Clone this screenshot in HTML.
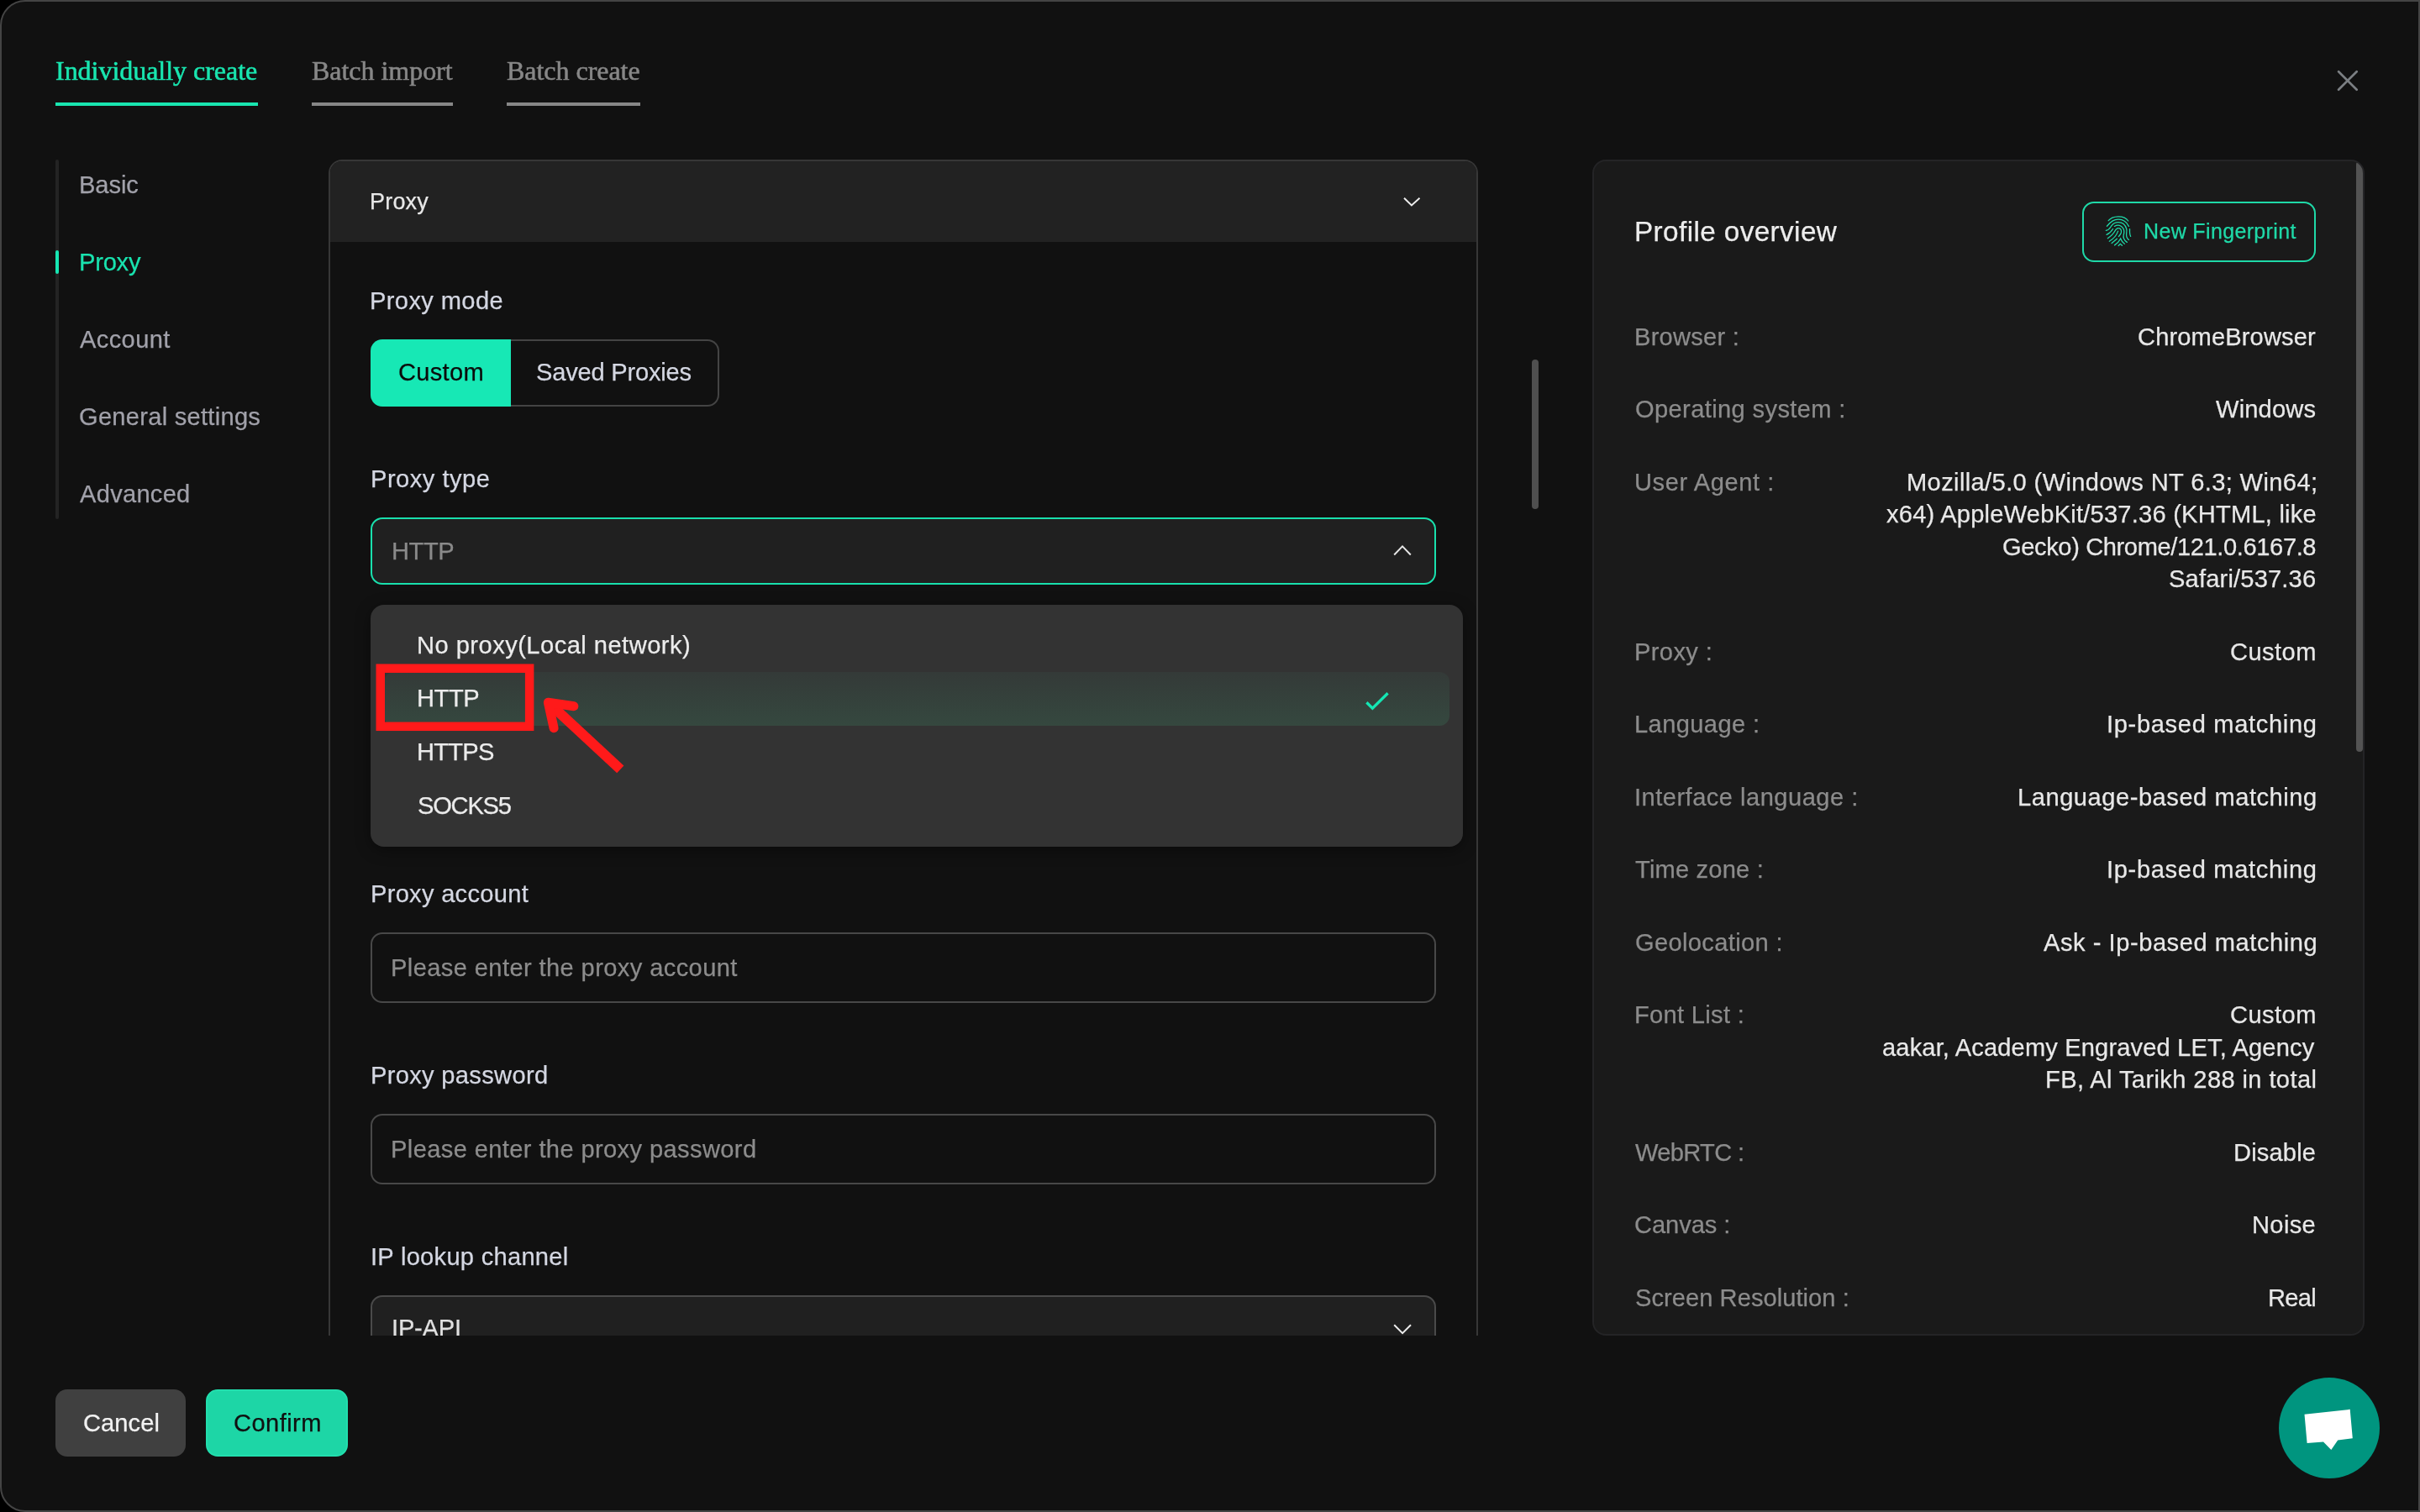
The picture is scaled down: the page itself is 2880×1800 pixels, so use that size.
<!DOCTYPE html>
<html lang="en"><head><meta charset="utf-8"><title>Create profile - Proxy</title>
<style>
*{box-sizing:border-box;margin:0;padding:0}
html,body{width:2880px;height:1800px;background:#000;overflow:hidden}
body{position:relative;font-family:"Liberation Sans",sans-serif}
.a{position:absolute}
.t{position:absolute;height:60px;line-height:60px;white-space:pre;will-change:transform}
.s{font-family:"Liberation Sans",sans-serif;-webkit-text-stroke:0.25px currentColor}
.r{font-family:"Liberation Serif",serif;-webkit-text-stroke:0.55px currentColor}
.modal{left:0;top:0;width:2880px;height:1800px;background:#111;border:2px solid #444;border-radius:30px 0 0 30px}
.card{left:391px;top:190px;width:1368px;height:1400px;border:2px solid #373737;border-bottom:0;border-radius:16px 16px 0 0;overflow:hidden}
.cardin{left:-393px;top:-192px;width:2880px;height:1800px}
.hdrbg{left:391px;top:190px;width:1368px;height:98px;background:#222}
.inp{left:441px;width:1268px;border:2px solid #484848;border-radius:14px}
svg{position:absolute;overflow:visible}
</style></head>
<body>
<div class="a modal"></div>

<!-- tabs -->
<div class="t r" style="left:65.5px;top:54.0px;font-size:32px;color:#19e6b0;letter-spacing:-0.03px;">Individually create</div>
<div class="t r" style="left:370.5px;top:54.0px;font-size:32px;color:#878787;letter-spacing:-0.03px;">Batch import</div>
<div class="t r" style="left:602.5px;top:54.0px;font-size:32px;color:#878787;letter-spacing:-0.03px;">Batch create</div>
<div class="a" style="left:66px;top:122px;width:241px;height:4px;background:#19e6b0"></div>
<div class="a" style="left:371px;top:122px;width:168px;height:4px;background:#878787"></div>
<div class="a" style="left:603px;top:122px;width:159px;height:4px;background:#878787"></div>
<svg style="left:2774px;top:76px" width="40" height="40" viewBox="0 0 40 40"><path d="M9.1 9.2 L30.7 30.8 M30.7 9.2 L9.1 30.8" stroke="#7b7f83" stroke-width="2.7" stroke-linecap="round" fill="none"/></svg>

<!-- sidebar -->
<div class="a" style="left:66px;top:190px;width:4px;height:428px;background:#242424;border-radius:2px"></div>
<div class="a" style="left:66px;top:298px;width:4px;height:28px;background:#17e6b3;border-radius:2px"></div>
<div class="t s" style="left:93.5px;top:190.0px;font-size:29.1px;color:#a1a1aa;letter-spacing:-0.07px;">Basic</div>
<div class="t s" style="left:93.6px;top:281.8px;font-size:29.1px;color:#19e3af;letter-spacing:-0.23px;">Proxy</div>
<div class="t s" style="left:95.4px;top:374.0px;font-size:29.1px;color:#a1a1aa;letter-spacing:0.37px;">Account</div>
<div class="t s" style="left:94.4px;top:465.7px;font-size:29.1px;color:#a1a1aa;letter-spacing:0.27px;">General settings</div>
<div class="t s" style="left:95.4px;top:557.7px;font-size:29.1px;color:#a1a1aa;letter-spacing:0.27px;">Advanced</div>

<!-- main card -->
<div class="a card"><div class="a cardin">
<div class="a hdrbg"></div>
<div class="t s" style="left:440.0px;top:210.0px;font-size:27.0px;color:#e8e8e8;letter-spacing:0.20px;">Proxy</div>
<svg style="left:1660px;top:225px" width="40" height="30" viewBox="0 0 40 30"><path d="M11 10.8 L19.9 19.4 L29.5 10.7" stroke="#ececec" stroke-width="2" fill="none"/></svg>

<div class="t s" style="left:440.0px;top:328.2px;font-size:29.1px;color:#d4d7e2;letter-spacing:0.38px;">Proxy mode</div>
<div class="a" style="left:441px;top:404px;width:167px;height:80px;background:#17e8b5;border-radius:14px 0 0 14px"></div>
<div class="a" style="left:608px;top:404px;width:248px;height:80px;border:2px solid #444;border-left:0;border-radius:0 14px 14px 0"></div>
<div class="t s" style="left:473.7px;top:413.3px;font-size:29.1px;color:#0b0b0b;letter-spacing:0.28px;">Custom</div>
<div class="t s" style="left:638.0px;top:413.3px;font-size:29.1px;color:#d4d7e2;letter-spacing:-0.21px;">Saved Proxies</div>

<div class="t s" style="left:440.7px;top:540.0px;font-size:29.1px;color:#d4d7e2;letter-spacing:0.50px;">Proxy type</div>
<div class="a inp" style="top:616px;height:80px;background:#202020;border-color:#19e0ad"></div>
<div class="t s" style="left:466.3px;top:625.7px;font-size:29.1px;color:#8a8a8a;letter-spacing:-0.40px;">HTTP</div>
<svg style="left:1649px;top:640px" width="40" height="30" viewBox="0 0 40 30"><path d="M10.2 20.5 L20 10.4 L29.8 20.5" stroke="#e6e6e6" stroke-width="2" fill="none"/></svg>

<div class="t s" style="left:440.9px;top:1034.0px;font-size:29.1px;color:#d4d7e2;letter-spacing:0.28px;">Proxy account</div>
<div class="a inp" style="top:1110px;height:84px"></div>
<div class="t s" style="left:464.8px;top:1121.8px;font-size:29.1px;color:#8c8c8c;letter-spacing:0.39px;">Please enter the proxy account</div>
<div class="t s" style="left:440.7px;top:1249.9px;font-size:29.1px;color:#d4d7e2;letter-spacing:0.32px;">Proxy password</div>
<div class="a inp" style="top:1326px;height:84px"></div>
<div class="t s" style="left:464.8px;top:1337.8px;font-size:29.1px;color:#8c8c8c;letter-spacing:0.38px;">Please enter the proxy password</div>
<div class="t s" style="left:440.7px;top:1466.4px;font-size:29.1px;color:#d4d7e2;letter-spacing:0.28px;">IP lookup channel</div>
<div class="a inp" style="top:1542px;height:80px;background:#202020;border-color:#4a4a4a"></div>
<div class="t s" style="left:465.6px;top:1551.0px;font-size:29.1px;color:#e0e0e0;letter-spacing:-0.20px;">IP-API</div>
<svg style="left:1649px;top:1567px" width="40" height="30" viewBox="0 0 40 30"><path d="M10.2 10.2 L20.1 20.1 L30 10.2" stroke="#ececec" stroke-width="2" fill="none"/></svg>

<!-- dropdown -->
<div class="a" style="left:441px;top:720px;width:1300px;height:288px;background:#333;border-radius:16px;box-shadow:0 4px 18px rgba(0,0,0,.4)"></div>
<div class="a" style="left:457px;top:800px;width:1268px;height:64px;border-radius:12px;background:linear-gradient(180deg,#343a38,#35483f)"></div>
<div class="t s" style="left:496.4px;top:738.0px;font-size:29.1px;color:#ececec;letter-spacing:0.47px;">No proxy(Local network)</div>
<div class="t s" style="left:496.4px;top:801.2px;font-size:29.1px;color:#ececec;letter-spacing:-0.43px;">HTTP</div>
<div class="t s" style="left:496.4px;top:865.3px;font-size:29.1px;color:#ececec;letter-spacing:-0.77px;">HTTPS</div>
<div class="t s" style="left:497.2px;top:929.4px;font-size:29.1px;color:#ececec;letter-spacing:-1.22px;">SOCKS5</div>
<svg style="left:1616px;top:815px" width="50" height="40" viewBox="0 0 50 40"><path d="M10.4 21.2 L17.4 28.1 L35.6 10.2" stroke="#14e6b3" stroke-width="3.3" fill="none"/></svg>

<!-- annotation -->
<svg style="left:440px;top:780px" width="210" height="100" viewBox="440 780 210 100"><rect x="452.75" y="795.7" width="177.4" height="69.1" stroke="#ff1a1a" stroke-width="10.5" fill="none"/></svg>
<svg style="left:630px;top:810px" width="130" height="130" viewBox="630 810 130 130"><path d="M738.3 915.8 L652.4 836.2" stroke="#ff1a1a" stroke-width="12" fill="none"/><path d="M682.9 840.7 L652.4 836.2 L659.1 866.7" stroke="#ff1a1a" stroke-width="11" stroke-linecap="round" stroke-linejoin="round" fill="none"/></svg>
</div></div>

<!-- scrollbar -->
<div class="a" style="left:1823px;top:428px;width:8px;height:178px;background:#4f4f4f;border-radius:4px"></div>

<!-- right panel -->
<div class="a" style="left:1895px;top:190px;width:919px;height:1400px;background:#1a1a1a;border:2px solid #242426;border-radius:16px;overflow:hidden">
<div class="a" style="right:0;top:0;width:8px;height:703px;background:#535353;border-radius:4px"></div>
</div>
<div class="t s" style="left:1944.5px;top:245.8px;font-size:33.3px;color:#ededed;letter-spacing:0.39px;">Profile overview</div>
<div class="a" style="left:2478px;top:240px;width:278px;height:72px;border:2px solid #1fd9a8;border-radius:14px"></div>
<svg style="left:2496px;top:248px" width="50" height="54" viewBox="0 0 1400 1512"><g stroke="#1fd9a8" stroke-width="36" stroke-linecap="round" fill="none">
<path d="M370 410 C500 250 880 210 1030 420"/>
<path d="M320 595 C470 420 560 370 700 370 C860 370 980 460 1050 600"/>
<path d="M290 740 C400 720 430 640 480 570 C540 490 620 465 700 465 C830 465 930 540 970 680 C1000 790 940 860 980 960 C1000 1010 1020 1030 1050 1050"/>
<path d="M570 600 C640 555 740 560 800 600 C870 650 900 740 890 820 C880 880 850 920 880 1000 C900 1050 940 1100 990 1130"/>
<path d="M310 880 C400 840 470 770 520 685"/>
<path d="M345 1000 C450 930 540 850 590 750 C620 690 660 655 710 660 C780 665 810 730 795 810 C780 870 740 900 710 940"/>
<path d="M400 1100 C520 1030 640 900 690 760"/>
<path d="M480 1165 L655 1015"/>
<path d="M575 1230 C660 1180 730 1100 775 1010 C800 1080 850 1150 905 1185"/>
<path d="M705 1245 L765 1185 L825 1240"/>
<path d="M1080 690 C1075 780 1080 880 1110 935"/>
</g></svg>
<div class="t s" style="left:2551.2px;top:245.1px;font-size:25.0px;color:#1fd9a8;letter-spacing:0.35px;">New Fingerprint</div>
<div class="t s" style="left:1944.5px;top:370.6px;font-size:29.1px;color:#8c8c8c;letter-spacing:0.24px;">Browser :</div>
<div class="t s" style="left:2543.7px;top:370.6px;font-size:29.1px;color:#e8e8e8;letter-spacing:0.13px;">ChromeBrowser</div>
<div class="t s" style="left:1945.5px;top:457.1px;font-size:29.1px;color:#8c8c8c;letter-spacing:0.37px;">Operating system :</div>
<div class="t s" style="left:2637.3px;top:457.1px;font-size:29.1px;color:#e8e8e8;letter-spacing:0.17px;">Windows</div>
<div class="t s" style="left:1944.5px;top:543.6px;font-size:29.1px;color:#8c8c8c;letter-spacing:0.56px;">User Agent :</div>
<div class="t s" style="left:2268.8px;top:543.6px;font-size:29.1px;color:#e8e8e8;letter-spacing:0.37px;">Mozilla/5.0 (Windows NT 6.3; Win64;</div>
<div class="t s" style="left:2244.7px;top:582.1px;font-size:29.1px;color:#e8e8e8;letter-spacing:0.22px;">x64) AppleWebKit/537.36 (KHTML, like</div>
<div class="t s" style="left:2383.0px;top:620.6px;font-size:29.1px;color:#e8e8e8;letter-spacing:-0.39px;">Gecko) Chrome/121.0.6167.8</div>
<div class="t s" style="left:2581.3px;top:659.1px;font-size:29.1px;color:#e8e8e8;letter-spacing:0.17px;">Safari/537.36</div>
<div class="t s" style="left:1944.5px;top:745.6px;font-size:29.1px;color:#8c8c8c;letter-spacing:0.38px;">Proxy :</div>
<div class="t s" style="left:2654.1px;top:745.6px;font-size:29.1px;color:#e8e8e8;letter-spacing:0.44px;">Custom</div>
<div class="t s" style="left:1944.5px;top:832.1px;font-size:29.1px;color:#8c8c8c;letter-spacing:0.39px;">Language :</div>
<div class="t s" style="left:2506.8px;top:832.1px;font-size:29.1px;color:#e8e8e8;letter-spacing:0.66px;">Ip-based matching</div>
<div class="t s" style="left:1944.5px;top:918.6px;font-size:29.1px;color:#8c8c8c;letter-spacing:0.48px;">Interface language :</div>
<div class="t s" style="left:2400.6px;top:918.6px;font-size:29.1px;color:#e8e8e8;letter-spacing:0.53px;">Language-based matching</div>
<div class="t s" style="left:1946.1px;top:1005.1px;font-size:29.1px;color:#8c8c8c;letter-spacing:0.19px;">Time zone :</div>
<div class="t s" style="left:2506.8px;top:1005.1px;font-size:29.1px;color:#e8e8e8;letter-spacing:0.66px;">Ip-based matching</div>
<div class="t s" style="left:1945.5px;top:1091.6px;font-size:29.1px;color:#8c8c8c;letter-spacing:0.34px;">Geolocation :</div>
<div class="t s" style="left:2431.5px;top:1091.6px;font-size:29.1px;color:#e8e8e8;letter-spacing:0.54px;">Ask - Ip-based matching</div>
<div class="t s" style="left:1944.5px;top:1178.1px;font-size:29.1px;color:#8c8c8c;letter-spacing:0.31px;">Font List :</div>
<div class="t s" style="left:2654.1px;top:1178.1px;font-size:29.1px;color:#e8e8e8;letter-spacing:0.44px;">Custom</div>
<div class="t s" style="left:2240.4px;top:1216.6px;font-size:29.1px;color:#e8e8e8;letter-spacing:0.14px;">aakar, Academy Engraved LET, Agency</div>
<div class="t s" style="left:2433.6px;top:1255.1px;font-size:29.1px;color:#e8e8e8;letter-spacing:0.39px;">FB, Al Tarikh 288 in total</div>
<div class="t s" style="left:1945.7px;top:1341.6px;font-size:29.1px;color:#8c8c8c;letter-spacing:-0.67px;">WebRTC :</div>
<div class="t s" style="left:2658.4px;top:1341.6px;font-size:29.1px;color:#e8e8e8;letter-spacing:0.15px;">Disable</div>
<div class="t s" style="left:1944.9px;top:1428.1px;font-size:29.1px;color:#8c8c8c;letter-spacing:-0.06px;">Canvas :</div>
<div class="t s" style="left:2679.9px;top:1428.1px;font-size:29.1px;color:#e8e8e8;letter-spacing:0.35px;">Noise</div>
<div class="t s" style="left:1945.5px;top:1514.6px;font-size:29.1px;color:#8c8c8c;letter-spacing:0.05px;">Screen Resolution :</div>
<div class="t s" style="left:2699.3px;top:1514.6px;font-size:29.1px;color:#e8e8e8;letter-spacing:-0.67px;">Real</div>

<!-- footer -->
<div class="a" style="left:66px;top:1654px;width:155px;height:80px;background:#404040;border-radius:14px"></div>
<div class="a" style="left:245px;top:1654px;width:169px;height:80px;background:#1dd6a6;border:2px solid #22dfae;border-radius:14px"></div>
<div class="t s" style="left:98.5px;top:1663.6px;font-size:29.1px;color:#f2f2f2;letter-spacing:0.06px;">Cancel</div>
<div class="t s" style="left:278.1px;top:1663.6px;font-size:29.1px;color:#101010;letter-spacing:0.43px;">Confirm</div>

<!-- chat -->
<div class="a" style="left:2712px;top:1640px;width:120px;height:120px;border-radius:60px;background:#00957f"></div>
<svg style="left:2712px;top:1640px" width="120" height="120" viewBox="2712 1640 120 120"><path d="M2742.5 1683.7 L2796.7 1677.8 L2799.8 1712.2 L2782.2 1714.6 L2774.3 1726.1 L2765 1716.4 L2745.6 1718.1 Z" fill="#fff"/></svg>
</body></html>
